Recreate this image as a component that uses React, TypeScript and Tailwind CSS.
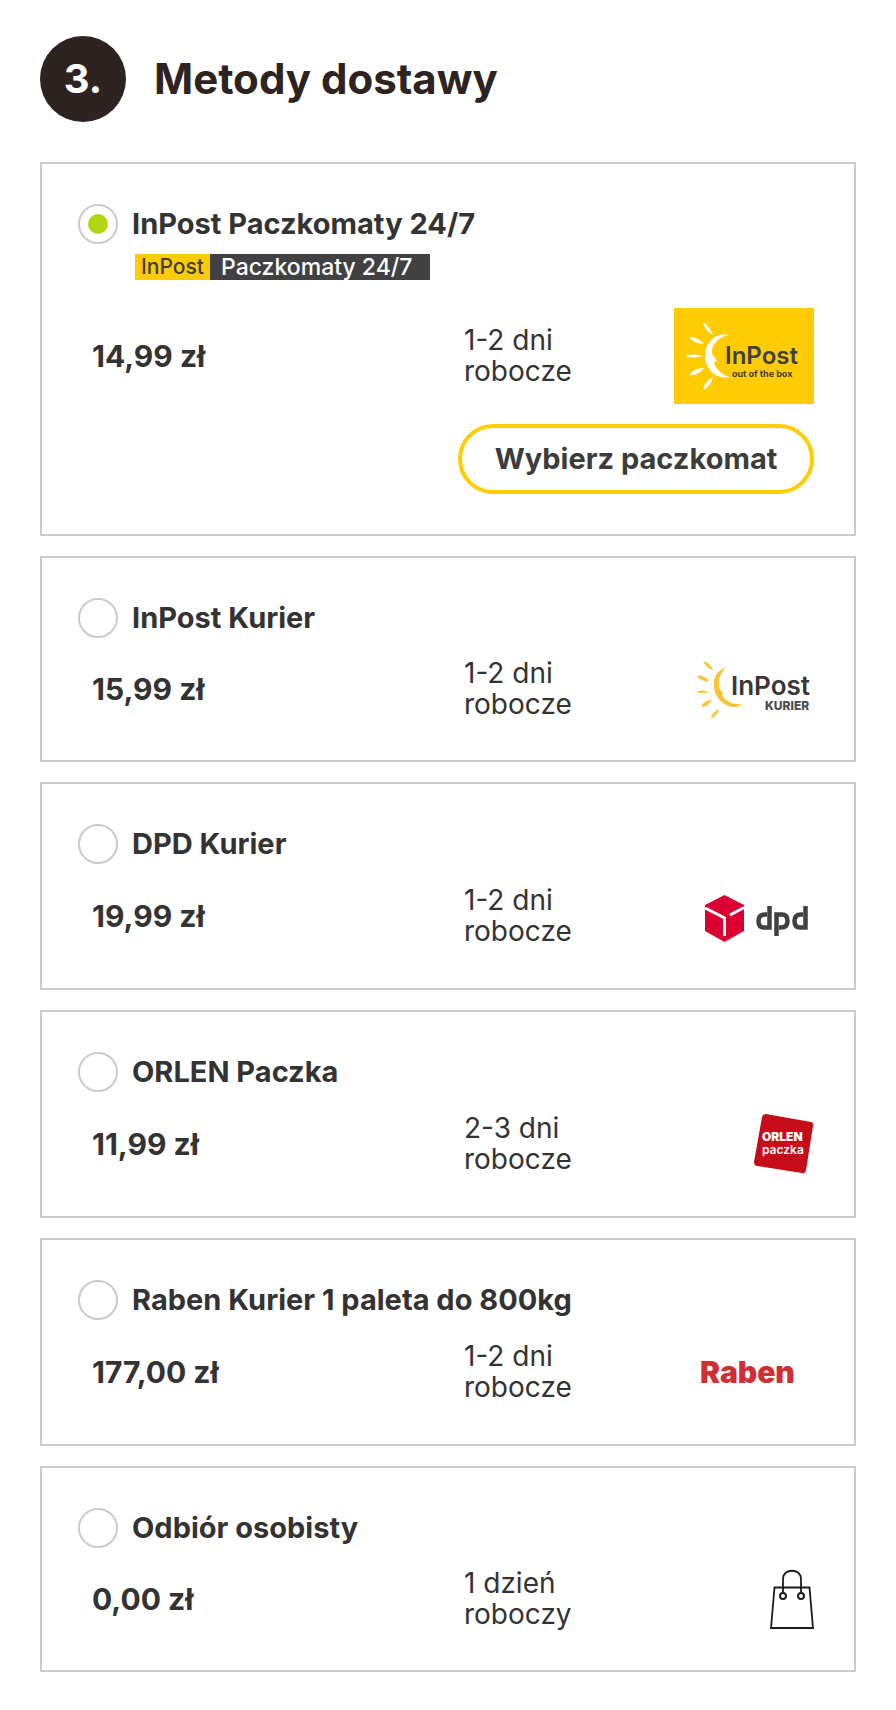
import React, { useState } from 'react';

interface DeliveryMethod {
  id: string;
  name: string;
  price: string;
  time: string[];
  logo: React.ReactElement;
  badge?: boolean;
  pickPoint?: boolean;
}

const RAYS = [
  'M29 14 Q36 19 39 27 Q31 23 29 14Z',
  'M15 29 Q24 29 30 36 Q20 36 15 29Z',
  'M11 48 Q19 45 28 48 Q19 51 11 48Z',
  'M15 67 Q20 60 30 60 Q24 68 15 67Z',
  'M29 82 Q31 73 39 69 Q37 78 29 82Z',
];

const InPostSun = () => (
  <>
    {RAYS.map((d) => (
      <path key={d} d={d} />
    ))}
    <path d="M55 27 C41 24 31 35 31 48 C31 61 42 72 56 69 C47 67 41 60 40 54 L43 53 L41 50 L38 46 C37 37 44 29 55 27Z" />
  </>
);

const InPostLogo = () => (
  <svg viewBox="0 0 140 96" className="w-[140px] h-24 font-['Inter',sans-serif]" role="img" aria-label="InPost">
    <rect width="140" height="96" fill="#ffcb05" />
    <g fill="#fff"><InPostSun /></g>
    <text x="51" y="56" fontSize="24" fontWeight="600" fill="#403f41">InPost</text>
    <text x="58" y="69" fontSize="9" fontWeight="700" fill="#403f41">out of the box</text>
  </svg>
);

const InPostKurierLogo = () => (
  <svg viewBox="0 0 120 60" className="w-[120px] h-[60px] font-['Inter',sans-serif]" role="img" aria-label="InPost Kurier">
    <g fill="#fbc32f">
      <path d="M9 2 Q16 4 19 11 Q12 9 9 2Z" />
      <path d="M3 17 Q10 16 15 22 Q7 23 3 17Z" />
      <path d="M2 33 Q8 30 15 33 Q8 35 2 33Z" />
      <path d="M7 48 Q10 41 18 41 Q14 48 7 48Z" />
      <path d="M17 60 Q18 53 25 50 Q23 57 17 60Z" />
      <path d="M32 9 C22 11 19 20 20 28 C21 40 32 49 43 48 L48 45 C38 46 31 42 28 36 L29 34 L27 32 C22 23 26 14 32 9Z" />
    </g>
    <text x="37" y="36" fontSize="26" fontWeight="600" fill="#373739">InPost</text>
    <text x="71" y="51" fontSize="12" fontWeight="800" fill="#4a4a4c">KURIER</text>
  </svg>
);

const DpdLogo = () => (
  <svg viewBox="0 0 110 64" className="w-[110px] h-16" role="img" aria-label="DPD">
    <path d="M20.500 11 L40 21 V47 L20.500 58 L1 47 V21Z" fill="#dc0032" />
    <path d="M1 24 L20.500 34 V52 M26 31 L40 23.500" fill="none" stroke="#fff" strokeWidth="3" />
    <g fill="none" stroke="#414042" strokeWidth="4.500">
      <path d="M65.500 22 V43.500 H60 Q54.500 43.500 54.500 37 Q54.500 30.500 61 30.500 H63" />
      <path d="M72.500 52 V30.500 H78 Q83.500 30.500 83.500 37 Q83.500 43.500 77 43.500 H75" />
      <path d="M101.500 22 V43.500 H96 Q90.500 43.500 90.500 37 Q90.500 30.500 97 30.500 H99" />
    </g>
  </svg>
);

const OrlenLogo = () => (
  <svg viewBox="0 0 60 64" className="w-[60px] h-16 font-['Inter',sans-serif]" role="img" aria-label="ORLEN Paczka">
    <path d="M12 2 L57 10 Q60 11 59 14 L52 58 Q51 62 48 61 L3 54 Q0 53 0 50 L8 5 Q9 2 12 2Z" fill="#c60c18" />
    <text x="8" y="29" fontSize="12" fontWeight="900" fill="#fff">ORLEN</text>
    <text x="8" y="42" fontSize="12" fontWeight="600" fill="#fff">paczka</text>
  </svg>
);

const RabenLogo = () => (
  <svg viewBox="0 0 114 64" className="w-[114px] h-16 font-['Inter',sans-serif]" role="img" aria-label="Raben">
    <text x="0" y="43" fontSize="30" fontWeight="900" fill="#cf3034">Raben</text>
  </svg>
);

const BagIcon = () => (
  <svg viewBox="0 0 44 60" className="w-11 h-[60px]" fill="none" stroke="#1c1c1c" role="img" aria-label="Odbiór osobisty">
    <path d="M4.500 18.500 H39.500 L43 59 H1Z" strokeWidth="1.800" />
    <path d="M1 59 H43" strokeWidth="2" />
    <path d="M13 24 V10 C13 -1 31 -1 31 10 V24" strokeWidth="1.800" />
    <circle cx="13" cy="27" r="3" strokeWidth="2" />
    <circle cx="31" cy="27" r="3" strokeWidth="2" />
  </svg>
);

const METHODS: DeliveryMethod[] = [
  { id: 'paczkomaty', name: 'InPost Paczkomaty 24/7', price: '14,99 zł', time: ['1-2 dni', 'robocze'], logo: <InPostLogo />, badge: true, pickPoint: true },
  { id: 'inpost', name: 'InPost Kurier', price: '15,99 zł', time: ['1-2 dni', 'robocze'], logo: <InPostKurierLogo /> },
  { id: 'dpd', name: 'DPD Kurier', price: '19,99 zł', time: ['1-2 dni', 'robocze'], logo: <DpdLogo /> },
  { id: 'orlen', name: 'ORLEN Paczka', price: '11,99 zł', time: ['2-3 dni', 'robocze'], logo: <OrlenLogo /> },
  { id: 'raben', name: 'Raben Kurier 1 paleta do 800kg', price: '177,00 zł', time: ['1-2 dni', 'robocze'], logo: <RabenLogo /> },
  { id: 'odbior', name: 'Odbiór osobisty', price: '0,00 zł', time: ['1 dzień', 'roboczy'], logo: <BagIcon /> },
];

interface MethodCardProps {
  method: DeliveryMethod;
  selected: boolean;
  onSelect: (id: string) => void;
}

const MethodCard: React.FC<MethodCardProps> = ({ method, selected, onSelect }) => (
  <div className="border-2 border-[#cbcbcb] pt-10 pb-10 pl-9 pr-10">
    <label htmlFor={method.id} className="flex items-center gap-[14px] cursor-pointer">
      <input
        type="radio"
        id={method.id}
        name="delivery"
        checked={selected}
        onChange={() => onSelect(method.id)}
        className="appearance-none grid place-content-center size-10 shrink-0 rounded-full border-2 border-[#cbcbcb] bg-white before:content-[''] before:size-5 before:rounded-full checked:before:bg-[#b0d812]"
      />
      <span className="text-[29px] leading-10 font-bold">{method.name}</span>
    </label>
    {method.badge && (
      <div className="pt-[10px] pb-2 pl-[57px]">
        <div className="flex h-[26px] w-[295px] leading-[26px]">
          <span className="w-[75px] bg-[#ffcb05] text-center text-[21px] font-medium text-[#403f41]">InPost</span>
          <span className="flex-1 bg-[#414042] pl-[11px] text-[23px] font-medium text-white">Paczkomaty 24/7</span>
        </div>
      </div>
    )}
    <div className="mt-5 flex items-center">
      <p className="flex-1 pl-[14px] text-[30px] leading-10 font-bold">{method.price}</p>
      <p className="w-[150px] text-[28px] leading-[31px]">
        {method.time[0]}
        <br />
        {method.time[1]}
      </p>
      <div className="flex w-[200px] justify-end">{method.logo}</div>
    </div>
    {method.pickPoint && (
      <div className="mt-5 flex justify-end">
        <button type="button" className="h-[70px] w-[356px] rounded-full border-4 border-[#ffcd00] text-[29px] font-bold text-[#3c3c3c] cursor-pointer">
          Wybierz paczkomat
        </button>
      </div>
    )}
  </div>
);

const App: React.FC = () => {
  const [selected, setSelected] = useState('paczkomaty');

  return (
    <main className="min-h-screen bg-white px-10 pt-9 pb-9 font-['Inter','Open_Sans',sans-serif] text-[#333]">
      <header className="flex items-center gap-7 text-[#2d2422]">
        <span className="flex size-[86px] items-center justify-center rounded-full bg-[#2d2422] text-[40px] font-bold text-white">3.</span>
        <h2 className="text-[42px] leading-[60px] font-bold">Metody dostawy</h2>
      </header>
      <div className="mt-10 flex flex-col gap-5">
        {METHODS.map((method) => (
          <MethodCard key={method.id} method={method} selected={selected === method.id} onSelect={setSelected} />
        ))}
      </div>
    </main>
  );
};

export default App;
